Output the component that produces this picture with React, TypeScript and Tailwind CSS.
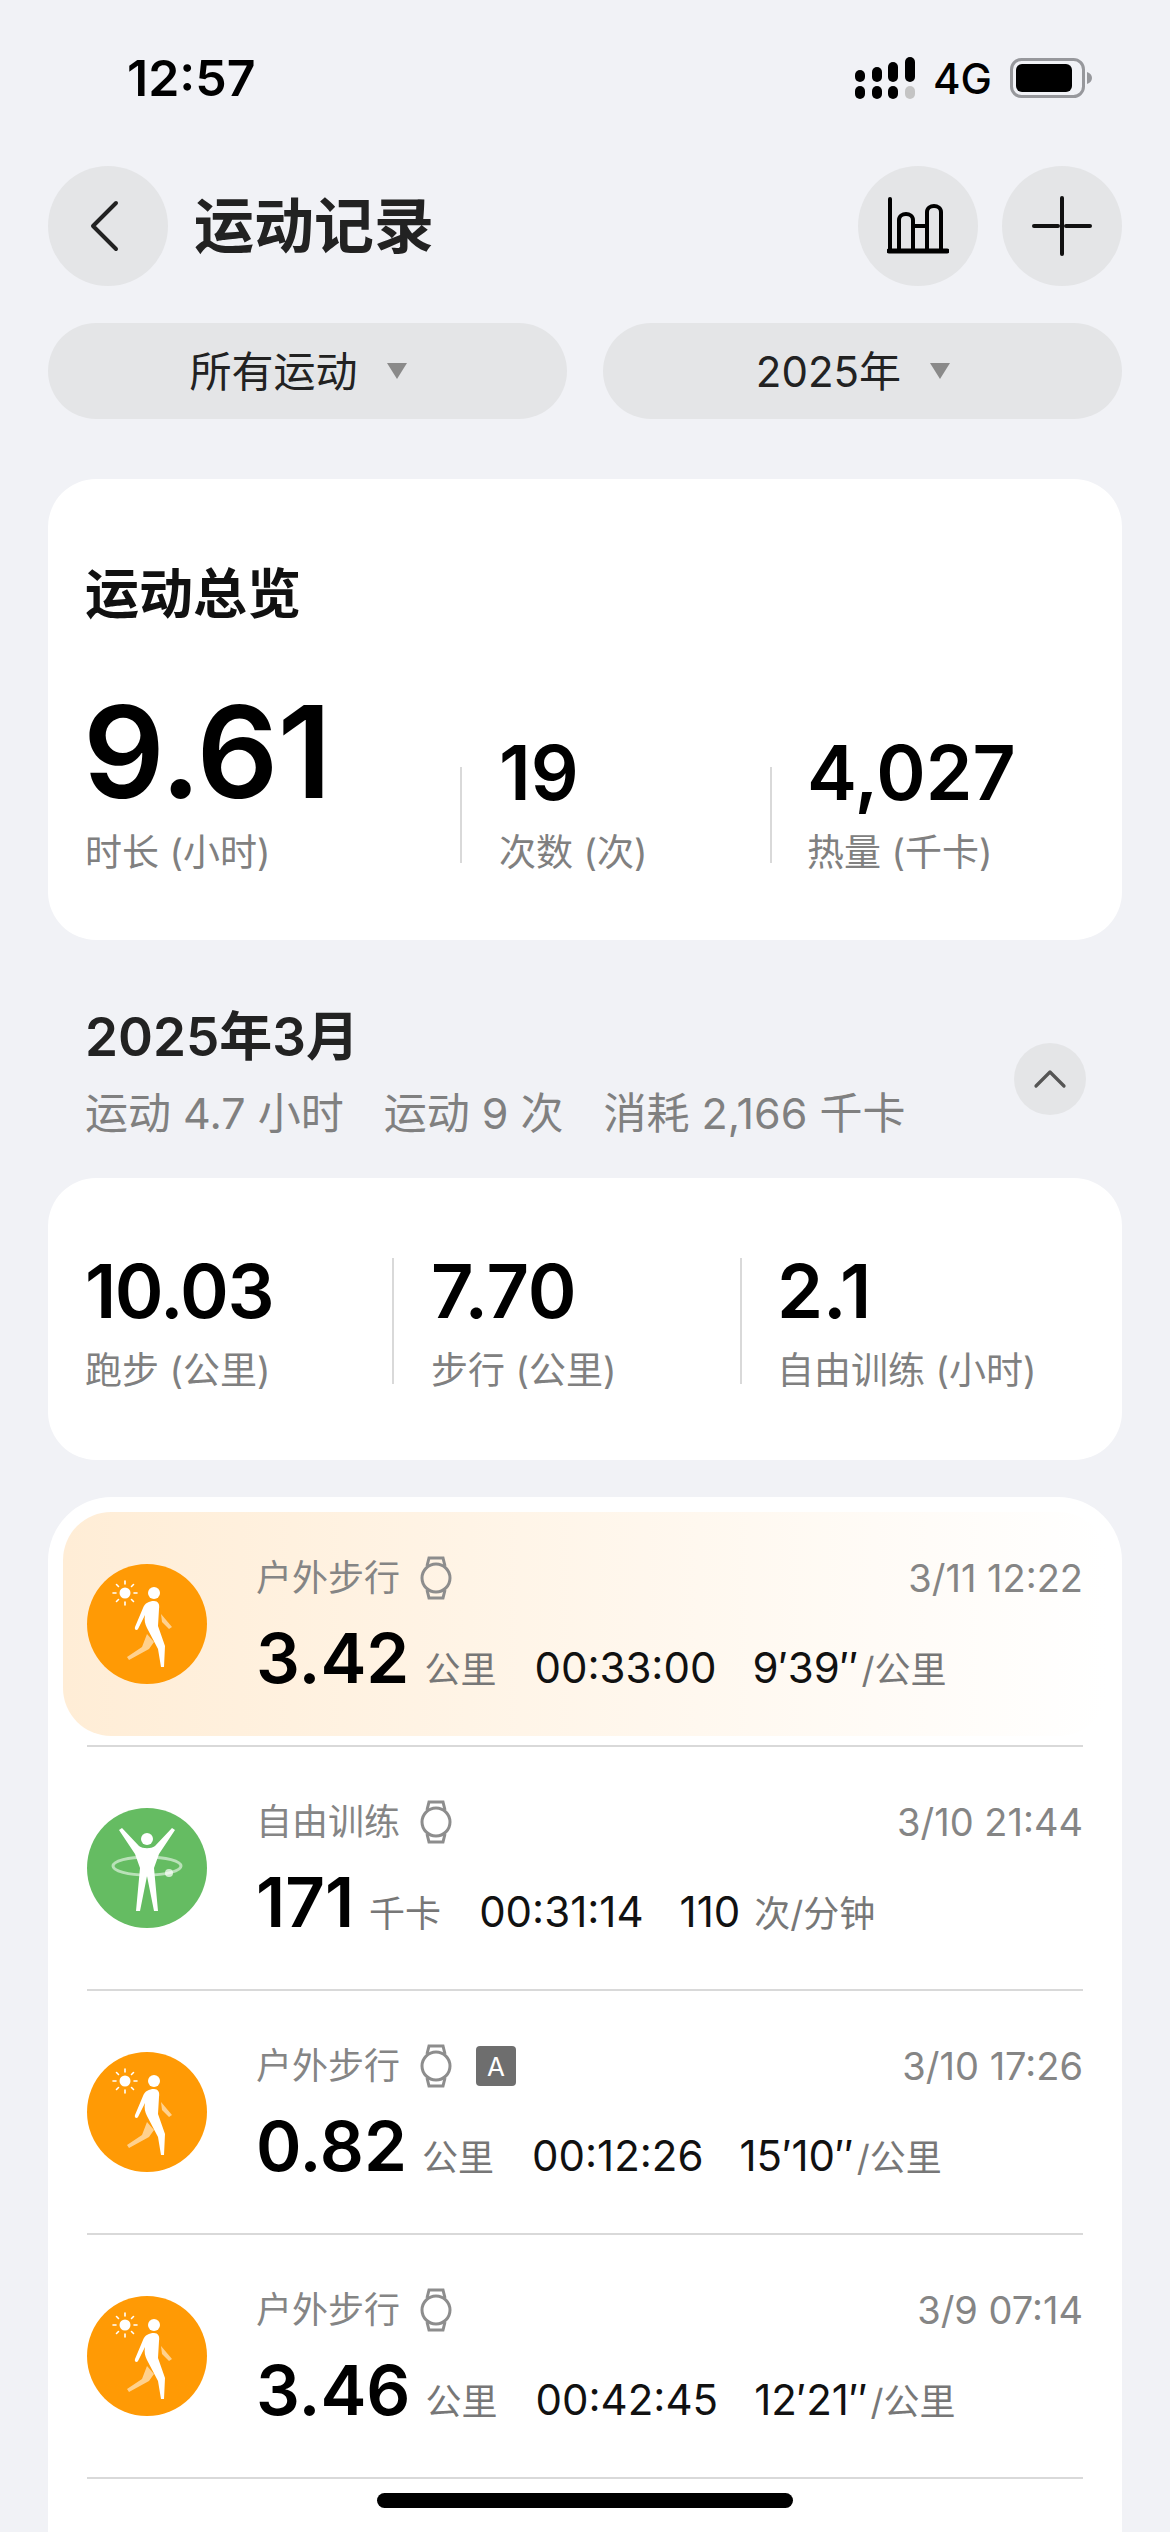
import { ChevronUp } from "lucide-react";

const FONT = "font-['Inter','Noto_Sans_CJK_SC',sans-serif]";

function SignalIcon() {
  return (
    <svg width="60" height="42" viewBox="0 0 60 42">
      <rect x="0" y="13" width="10" height="12" rx="5" fill="#000" />
      <rect x="17" y="10" width="10" height="15" rx="5" fill="#000" />
      <rect x="33" y="5" width="10" height="20" rx="5" fill="#000" />
      <rect x="50" y="0" width="10" height="25" rx="5" fill="#000" />
      <rect x="0" y="29" width="10" height="13" rx="5" fill="#000" />
      <rect x="17" y="29" width="10" height="13" rx="5" fill="#000" />
      <rect x="33" y="29" width="10" height="13" rx="5" fill="#000" />
      <rect x="50" y="29" width="10" height="13" rx="5" fill="#c4c4c4" />
    </svg>
  );
}

function BatteryIcon() {
  return (
    <svg width="82" height="40" viewBox="0 0 82 40">
      <rect x="1.5" y="1.5" width="72" height="37" rx="10" fill="none" stroke="#97989c" strokeWidth="3" />
      <rect x="6" y="6" width="56" height="28" rx="6" fill="#000" />
      <path d="M77 14 C80 15 82 17 82 20 C82 23 80 25 77 26Z" fill="#97989c" />
    </svg>
  );
}

function BackIcon() {
  return (
    <svg className="mr-[8px]" width="30" height="52" viewBox="0 0 30 52" fill="none" stroke="#222" strokeWidth="4" strokeLinecap="round" strokeLinejoin="round">
      <path d="M27 3 L4 26 L27 49" />
    </svg>
  );
}

function ChartIcon() {
  return (
    <svg width="62" height="58" viewBox="0 0 62 58" fill="none" stroke="#000" strokeWidth="4">
      <path d="M3 2 V54" strokeLinecap="round" />
      <path d="M2 54 H60" strokeWidth="5" strokeLinecap="round" />
      <path d="M12 54 V23 C12 15 26 15 26 23 V54" />
      <path d="M26 29 H40" />
      <path d="M40 54 V15 C40 7 54 7 54 15 V54" />
    </svg>
  );
}

function PlusIcon() {
  return (
    <svg width="60" height="60" viewBox="0 0 60 60" fill="none" stroke="#111" strokeWidth="4" strokeLinecap="round">
      <path d="M2 30 H26" />
      <path d="M34 30 H58" />
      <path d="M30 2 V58" />
    </svg>
  );
}

function WatchIcon() {
  return (
    <svg width="32" height="44" viewBox="0 0 32 44" fill="none" stroke="#8d8d8d" strokeWidth="3">
      <circle cx="16" cy="22" r="14" />
      <path d="M7 10 L9 2 H23 L25 10" />
      <path d="M7 34 L9 42 H23 L25 34" />
    </svg>
  );
}

function WalkIcon() {
  return (
    <div className="flex size-[120px] shrink-0 items-center justify-center rounded-full bg-[#ff9a05]">
      <svg width="120" height="120" viewBox="0 0 120 120" fill="#fff">
        <circle cx="38" cy="29" r="5.5" />
        <path
          d="M38 17 V20 M38 38 V41 M26 29 H29 M47 29 H50 M29.5 20.5 L31.5 22.5 M44.5 35.5 L46.5 37.5 M29.5 37.5 L31.5 35.5 M44.5 22.5 L46.5 20.5"
          stroke="#fff"
          strokeWidth="1.6"
          strokeLinecap="round"
        />
        <circle cx="67" cy="29" r="6" />
        <path d="M67 37 C62 37 58 39 56 44 L48 63 C47 66 50 67 51 65 L58 51 C57 56 58 60 60 64 L71 85 L74 103 L77 103 L78 82 L71 62 L72 45 C73 40 71 37 67 37Z" />
        <path d="M60 70 L55 83 L40 93 L42 96 L62 85 L67 78Z" opacity="0.55" />
        <path d="M74 50 L85 63 L82 65 L75 58Z" opacity="0.55" />
      </svg>
    </div>
  );
}

function HulaIcon() {
  return (
    <div className="flex size-[120px] shrink-0 items-center justify-center rounded-full bg-[#65bc62]">
      <svg width="120" height="120" viewBox="0 0 120 120" fill="#fff">
        <ellipse cx="60" cy="58" rx="34" ry="9" fill="none" stroke="#fff" strokeWidth="3" opacity="0.55" />
        <circle cx="82" cy="65" r="4" opacity="0.7" />
        <circle cx="60" cy="31" r="6" />
        <path d="M32 22 L35 20 L52 38 C56 41 64 41 68 38 L85 20 L88 22 L72 46 L67 60 L71 103 L67 103 L60 68 L53 103 L49 103 L53 60 L48 46Z" />
      </svg>
    </div>
  );
}

function Dropdown({ label }: { label: string }) {
  return (
    <div className="flex h-[96px] flex-1 items-center justify-center gap-[28px] rounded-full bg-[#e4e5e7] pr-[18px] text-[42px] text-[#222]">
      <span>{label}</span>
      <svg width="22" height="18" viewBox="0 0 22 18">
        <path d="M1 1 H21 L11 17Z" fill="#8a8a8a" />
      </svg>
    </div>
  );
}

function Stat({ value, label, big, size }: { value: string; label: string; big?: boolean; size?: string }) {
  return (
    <div className="flex flex-col">
      <span
        className={
          big
            ? "mb-[11px] -ml-[2px] text-[128px] leading-[130px] font-semibold tracking-[-1px] text-black"
            : `mb-[10px] ${size ?? "text-[75px]"} leading-[90px] font-semibold text-black`
        }
      >
        {value}
      </span>
      <span className="text-[37px] leading-[50px] text-[#808080]">{label}</span>
    </div>
  );
}

type Activity = {
  name: string;
  icon: "walk" | "hula";
  value: string;
  unit: string;
  time: string;
  extra: string;
  extraUnit: string;
  date: string;
  auto?: boolean;
  active?: boolean;
};

const activities: Activity[] = [
  { name: "户外步行", icon: "walk", value: "3.42", unit: "公里", time: "00:33:00", extra: "9′39″", extraUnit: "/公里", date: "3/11 12:22", active: true },
  { name: "自由训练", icon: "hula", value: "171", unit: "千卡", time: "00:31:14", extra: "110", extraUnit: "次/分钟", date: "3/10 21:44" },
  { name: "户外步行", icon: "walk", value: "0.82", unit: "公里", time: "00:12:26", extra: "15′10″", extraUnit: "/公里", date: "3/10 17:26", auto: true },
  { name: "户外步行", icon: "walk", value: "3.46", unit: "公里", time: "00:42:45", extra: "12′21″", extraUnit: "/公里", date: "3/9 07:14" },
  // next row, only the top of its watch icon shows above the fold
  { name: "", icon: "walk", value: "", unit: "", time: "", extra: "", extraUnit: "", date: "" },
];

function ActivityRow({ item }: { item: Activity }) {
  return (
    <div className="flex flex-col">
      <div
        className={
          item.active
            ? "-mx-[24px] flex h-[224px] items-center rounded-[48px] bg-gradient-to-r from-[#ffedd6] to-white px-[24px]"
            : "flex h-[242px] items-center"
        }
      >
        {item.icon === "walk" ? <WalkIcon /> : <HulaIcon />}
        <div className="ml-[49px] flex flex-1 flex-col pt-[8px]">
          <div className="flex h-[50px] items-center">
            <span className="w-[144px] text-[36px] text-[#858585]">{item.name}</span>
            <span className="ml-[20px] flex">
              <WatchIcon />
            </span>
            {item.auto && (
              <span className="ml-[24px] flex size-[40px] items-center justify-center rounded-[4px] bg-[#6e6e6e] text-[26px] text-white">
                A
              </span>
            )}
            <span className="ml-auto text-[38px] text-[#858585]">{item.date}</span>
          </div>
          <div className="mt-[10px] flex items-baseline">
            <span className="text-[69px] leading-[90px] font-semibold text-black">{item.value}</span>
            <span className="ml-[15px] text-[36px] text-[#777]">{item.unit}</span>
            <span className="ml-[38px] text-[42px] text-[#111]">{item.time}</span>
            <span className="ml-[36px] text-[42px] text-[#111]">{item.extra}</span>
            <span className={item.extra === "110" ? "ml-[14px] text-[36px] text-[#777]" : "ml-[3px] text-[36px] text-[#777]"}>
              {item.extraUnit}
            </span>
          </div>
        </div>
      </div>
      <div className={item.active ? "mt-[9px] h-[2px] bg-[#d9d9d9]" : "h-[2px] bg-[#d9d9d9]"} />
    </div>
  );
}

export default function App() {
  return (
    <div className={`${FONT} relative h-[2532px] w-[1170px] overflow-hidden bg-[#f1f2f6]`}>
      {/* status bar */}
      <div className="flex h-[156px] items-center pr-[78px] pl-[127px]">
        <span className="text-[50px] font-semibold text-black">12:57</span>
        <div className="ml-auto flex items-center gap-[18px]">
          <SignalIcon />
          <span className="text-[42px] font-medium text-black">4G</span>
          <BatteryIcon />
        </div>
      </div>

      <div className="flex flex-col px-[48px]">
        {/* header */}
        <div className="mt-[10px] flex h-[120px] items-center">
          <div className="flex size-[120px] items-center justify-center rounded-full bg-[#e4e5e7]">
            <BackIcon />
          </div>
          <h1 className="ml-[26px] text-[60px] font-semibold text-[#222]">运动记录</h1>
          <div className="ml-auto flex size-[120px] items-center justify-center rounded-full bg-[#e4e5e7]">
            <ChartIcon />
          </div>
          <div className="ml-[24px] flex size-[120px] items-center justify-center rounded-full bg-[#e4e5e7]">
            <PlusIcon />
          </div>
        </div>

        {/* filters */}
        <div className="mt-[37px] flex gap-[36px]">
          <Dropdown label="所有运动" />
          <Dropdown label="2025年" />
        </div>

        {/* overview */}
        <div className="mt-[60px] h-[461px] rounded-[48px] bg-white px-[37px] pt-[80px]">
          <h2 className="text-[54px] leading-[72px] font-semibold text-[#111]">运动总览</h2>
          <div className="mt-[56px] flex items-end">
            <div className="w-[375px]">
              <Stat big value="9.61" label="时长 (小时)" />
            </div>
            <div className="mb-[15px] h-[96px] w-[2px] bg-[#d9d9d9]" />
            <div className="ml-[37px] w-[271px]">
              <Stat value="19" label="次数 (次)" />
            </div>
            <div className="mb-[15px] h-[96px] w-[2px] bg-[#d9d9d9]" />
            <div className="ml-[35px]">
              <Stat value="4,027" label="热量 (千卡)" />
            </div>
          </div>
        </div>

        {/* month */}
        <div className="mt-[60px] flex h-[178px] items-center pr-[36px] pb-[33px] pl-[37px]">
          <div className="flex flex-col">
            <span className="text-[53px] leading-[70px] font-semibold text-[#222]">2025年3月</span>
            <span className="mt-[11px] flex gap-[40px] text-[43px] leading-[60px] text-[#808080]">
              <span>运动 4.7 小时</span>
              <span>运动 9 次</span>
              <span>消耗 2,166 千卡</span>
            </span>
          </div>
          <div className="mt-[12px] ml-auto flex size-[72px] items-center justify-center rounded-full bg-[#e4e5e7]">
            <ChevronUp size={56} strokeWidth={1.4} color="#555" />
          </div>
        </div>

        {/* month totals */}
        <div className="flex h-[282px] items-center rounded-[48px] bg-white px-[37px] pt-[3px]">
          <div className="w-[307px]">
            <Stat size="text-[74px] tracking-[-1.5px]" value="10.03" label="跑步 (公里)" />
          </div>
          <div className="h-[126px] w-[2px] bg-[#d9d9d9]" />
          <div className="ml-[37px] w-[309px]">
            <Stat size="text-[74px]" value="7.70" label="步行 (公里)" />
          </div>
          <div className="h-[126px] w-[2px] bg-[#d9d9d9]" />
          <div className="ml-[35px]">
            <Stat size="text-[74px]" value="2.1" label="自由训练 (小时)" />
          </div>
        </div>

        {/* activities */}
        <div className="mt-[37px] rounded-t-[64px] bg-white px-[39px] pt-[15px]">
          {activities.map((item, i) => (
            <ActivityRow key={i} item={item} />
          ))}
        </div>
      </div>

      {/* home indicator */}
      <div className="absolute bottom-[24px] left-[377px] h-[15px] w-[416px] rounded-full bg-black" />
    </div>
  );
}
